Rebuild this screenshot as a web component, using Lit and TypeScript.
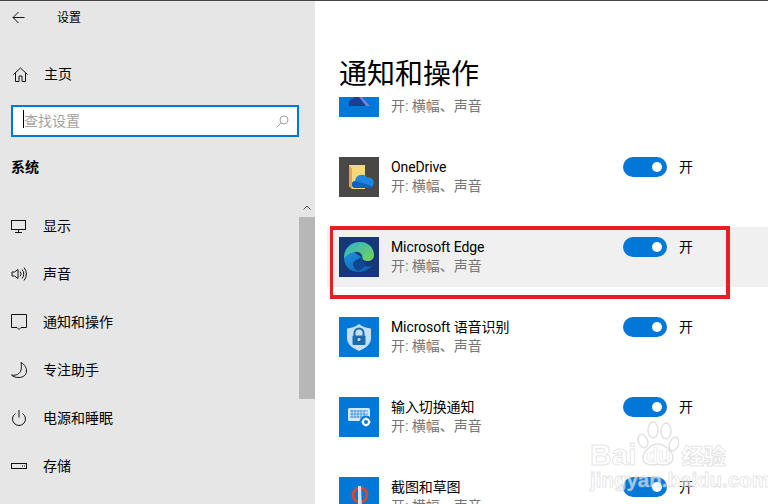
import { LitElement, html, css, svg } from "lit";
import { customElement } from "lit/decorators.js";

const navIcons: Record<string, unknown> = {
  display: svg`<rect x="0.5" y="2.5" width="14" height="9"/><path d="M7.5 11.5v3M4 14.5h7"/>`,
  sound: svg`<path d="M1 6h2.500L7 3.500v9L3.500 10H1z"/><path d="M9 5.500a3.500 3.500 0 0 1 0 5M11 3.500a6.500 6.500 0 0 1 0 9M13 1.500a10 10 0 0 1 0 13"/>`,
  notify: svg`<path d="M.5 .5h15v13H10l-2 2-2-2H.5z"/>`,
  focus: svg`<path d="M10 .5C14 2.500 15.500 6 15.500 9c0 4-3.500 6.500-7.500 6.500-3 0-6-.7-7.500-2.500 4.500 1 8.500-1 9.500-5 .5-2.500.5-5 0-7.500z"/>`,
  power: svg`<path d="M4.500 3.500a6.500 6.500 0 1 0 7 0M8 0v7.500"/>`,
  storage: svg`<rect x="0.5" y="5.500" width="15" height="5"/><path d="M11 8h1M13 8h1"/>`,
};

const nav = [
  { label: "显示", icon: "display" },
  { label: "声音", icon: "sound" },
  { label: "通知和操作", icon: "notify" },
  { label: "专注助手", icon: "focus" },
  { label: "电源和睡眠", icon: "power" },
  { label: "存储", icon: "storage" },
];

const appIcons: Record<string, unknown> = {
  first: svg`<rect width="40" height="40" fill="#0078d7"/><path d="M10 29v-5l6-4h7l8 9z" fill="#1b3f8f"/><path d="M23 20l8 9h-4l-7-9z" fill="#7b7fe0"/>`,
  onedrive: svg`<rect width="40" height="40" fill="#4a4846"/>
    <path d="M10 8l16 0v24H13l-3-3z" fill="#f5d87e"/><path d="M10 8l3 4v20l-3-3z" fill="#d9ab45"/>
    <path d="M17 31a3.500 3.500 0 0 1-1-7 7 7 0 0 1 12.500-3.500 5.200 5.200 0 0 1 2 10.500z" fill="#1c86e0"/>
    <path d="M17 31a3.500 3.500 0 0 1-1-7l11 3 6 2.500c-.7 1-1.500 1.500-2.500 1.500z" fill="#0d62bd"/>`,
  edge: svg`<defs>
      <linearGradient id="eg" x1="0" y1="0" x2="1" y2="1"><stop offset="0" stop-color="#2fb0d6"/><stop offset="1" stop-color="#74d64e"/></linearGradient>
      <linearGradient id="eb" x1="0" y1="0" x2="1" y2="1"><stop offset="0" stop-color="#1e94e4"/><stop offset="1" stop-color="#0b5cab"/></linearGradient>
    </defs>
    <rect width="40" height="40" fill="#16387a"/>
    <path d="M5 20c0 9 6 15 15 15 5 0 10-2.500 13-6.500-3 1.500-7 1.500-10-1-1-3-1-5 0-7L12 13z" fill="url(#eb)"/>
    <path d="M5 21C5 11 12 5 21 5c9 0 14 6.500 14 13 0 4-3 6-6.500 6-3 0-5-1-5-3 0-4-3-7-8-6-5 1-8 3-10.500 6z" fill="url(#eg)"/>
    <path d="M14 27c0-3 4-4 8-6.500.5 2.500 2 4.500 5 6.500-2 3.500-5 6-8 7-3-1.500-5-4-5-7z" fill="#0f4692"/>`,
  shield: svg`<rect width="40" height="40" fill="#0078d7"/>
    <path d="M20 7c4 3 8 4 12 4.500V21c0 6-5 10-12 13-7-3-12-7-12-13v-9.500C12 11 16 10 20 7z" fill="#c5e0f5"/>
    <path d="M15.500 19v-3a4.500 4.500 0 0 1 9 0v3" fill="none" stroke="#1c6bb0" stroke-width="2"/>
    <rect x="13.500" y="18.500" width="13" height="9.500" rx="1" fill="#1c6bb0"/>
    <circle cx="20" cy="22.500" r="1.500" fill="#c5e0f5"/>`,
  keyboard: svg`<rect width="40" height="40" fill="#0078d7"/>
    <rect x="9" y="11" width="22" height="13" rx="1.500" fill="#d3e8f8"/>
    <path d="M11 14h18M11 17h18M11 20h14M13 13v8M16 13v8M19 13v8M22 13v8M25 13v8" stroke="#4a9be0" stroke-width="1"/>
    <circle cx="27" cy="25" r="6.500" fill="#0078d7"/>
    <circle cx="27" cy="25" r="3" fill="none" stroke="#fff" stroke-width="2"/>
    <path d="M27 20.500v2M27 27.500v2M22.500 25h2M29.500 25h2" stroke="#fff" stroke-width="1.500"/>`,
  snip: svg`<rect width="40" height="40" fill="#0078d7"/>
    <circle cx="21" cy="18" r="7" fill="none" stroke="#d8482a" stroke-width="3"/>
    <path d="M19 9h3l1 24h-4z" fill="#cfe3f5"/>
    <circle cx="13" cy="29" r="3" fill="none" stroke="#2a66b0" stroke-width="2"/>`,
};

const rows = [
  { name: "", icon: "first", clipped: true },
  { name: "OneDrive", icon: "onedrive" },
  { name: "Microsoft Edge", icon: "edge", active: true },
  { name: "Microsoft 语音识别", icon: "shield" },
  { name: "输入切换通知", icon: "keyboard" },
  { name: "截图和草图", icon: "snip" },
];

@customElement("app-root")
export class AppRoot extends LitElement {
  static styles = css`
    :host {
      display: flex;
      position: relative;
      width: 768px;
      height: 504px;
      overflow: hidden;
      background: #fff;
      color: #000;
      font-family: Roboto, "Noto Sans CJK SC", sans-serif;
      font-size: 14px;
      box-sizing: border-box;
      border-top: 1px solid #444;
    }
    svg {
      display: block;
    }
    .side {
      position: relative;
      width: 315px;
      flex: none;
      background: #e6e6e6;
    }
    .head {
      display: flex;
      align-items: center;
      height: 32px;
      padding-left: 12px;
    }
    .head span {
      margin: 0 0 2px 32px;
      font-size: 12px;
    }
    .line {
      fill: none;
      stroke: #111;
      stroke-width: 1;
    }
    .home {
      display: flex;
      align-items: center;
      height: 48px;
      margin-top: 17px;
      padding-left: 13px;
      gap: 16px;
    }
    .home span,
    .item span {
      margin-bottom: 2px;
    }
    .search {
      position: relative;
      display: flex;
      align-items: center;
      justify-content: space-between;
      box-sizing: border-box;
      width: 288px;
      height: 32px;
      margin: 7px 0 0 11px;
      padding: 0 8px 0 11px;
      background: #fff;
      border: 2px solid #0078d7;
      color: #a3a3a3;
    }
    .search span {
      margin-bottom: 2px;
    }
    .caret {
      position: absolute;
      left: 10px;
      top: 3px;
      width: 1px;
      height: 18px;
      background: #000;
    }
    .section {
      height: 20px;
      line-height: 20px;
      margin: 20px 0 25px 11px;
      font-weight: 700;
    }
    .item {
      display: flex;
      align-items: center;
      height: 48px;
      padding-left: 11px;
      gap: 16px;
    }
    .item svg {
      width: 16px;
      height: 16px;
    }
    .bar {
      position: absolute;
      right: 0;
      top: 216px;
      width: 16px;
      height: 182px;
      background: #b7b7b7;
    }
    .up {
      position: absolute;
      right: 4px;
      top: 204px;
    }
    .main {
      flex: 1;
      display: flex;
      flex-direction: column;
      min-width: 0;
      padding-left: 12px;
    }
    h1 {
      margin: 0;
      height: 96px;
      box-sizing: border-box;
      padding: 54px 0 0 12px;
      font-size: 28px;
      line-height: 40px;
      font-weight: 400;
    }
    .list {
      flex: 1;
      overflow: hidden;
    }
    .row {
      display: flex;
      align-items: flex-start;
      height: 60px;
      padding: 10px 0 10px 12px;
      box-sizing: border-box;
      margin-bottom: 20px;
    }
    .row.clipped {
      margin-top: -30px;
    }
    .row.active {
      background: #f0f0f0;
    }
    .pic {
      width: 40px;
      height: 40px;
      flex: none;
    }
    .text {
      width: 232px;
      flex: none;
      margin-left: 12px;
    }
    .name {
      height: 20px;
      line-height: 20px;
      letter-spacing: -0.1px;
    }
    .sub {
      height: 19px;
      line-height: 19px;
      color: #767676;
    }
    .toggle {
      display: flex;
      align-items: center;
      justify-content: flex-end;
      box-sizing: border-box;
      width: 44px;
      height: 20px;
      padding-right: 5px;
      border-radius: 10px;
      background: #0078d7;
      flex: none;
    }
    .toggle i {
      width: 10px;
      height: 10px;
      border-radius: 50%;
      background: #fff;
    }
    .state {
      margin-left: 12px;
      height: 20px;
      line-height: 20px;
    }
    .mark {
      position: absolute;
      left: 330px;
      top: 225px;
      width: 400px;
      height: 73px;
      box-sizing: border-box;
      border: 4px solid #ed1c24;
      border-left-width: 3px;
      pointer-events: none;
    }
    .wm {
      position: absolute;
      left: 590px;
      top: 420px;
      width: 150px;
      color: rgba(255, 255, 255, 0.6);
      -webkit-text-stroke: 1px rgba(190, 190, 190, 0.4);
      font-family: "Liberation Sans", sans-serif;
      font-weight: 700;
      pointer-events: none;
    }
    .brand {
      display: flex;
      align-items: flex-end;
      height: 45px;
      font-size: 30px;
      line-height: 29px;
    }
    .brand span {
      margin-bottom: -3px;
    }
    .brand svg {
      margin-right: 3px;
      flex: none;
    }
    .brand b {
      font-family: "Noto Sans CJK SC", sans-serif;
      font-size: 22px;
      line-height: 24px;
    }
    .url {
      margin-top: 4px;
      font-size: 20.5px;
      line-height: 20px;
      white-space: nowrap;
    }
    .paw-text {
      font-size: 20px;
      font-weight: 700;
      fill: rgba(255, 255, 255, 0.6);
      stroke-width: 0.6;
    }
  `;

  renderRow(r: { name: string; icon: string; clipped?: boolean; active?: boolean }) {
    return html`<div class="row ${r.clipped ? "clipped" : ""} ${r.active ? "active" : ""}">
      <svg class="pic" viewBox="0 0 40 40">${appIcons[r.icon]}</svg>
      <div class="text">
        <div class="name">${r.name}</div>
        <div class="sub">开: 横幅、声音</div>
      </div>
      ${r.clipped
        ? ""
        : html`<div class="toggle"><i></i></div>
            <div class="state">开</div>`}
    </div>`;
  }

  render() {
    return html`
      <div class="side">
        <div class="head">
          <svg class="line" width="13" height="13" viewBox="0 0 13 13"><path d="M12.500 6.500H1M6.500 1 1 6.500 6.500 12"/></svg>
          <span>设置</span>
        </div>
        <div class="home">
          <svg class="line" width="15" height="15" viewBox="0 0 15 15"><path d="M.5 7.500 7.500 1l7 6.500M2.500 6v8.500h3.500V9h3v5.500h3.500V6"/></svg>
          <span>主页</span>
        </div>
        <div class="search">
          <i class="caret"></i>
          <span>查找设置</span>
          <svg width="13" height="13" viewBox="0 0 13 13" fill="none" stroke="#a3a3a3"><circle cx="8" cy="5" r="4"/><path d="M5 8 .5 12.500"/></svg>
        </div>
        <div class="section">系统</div>
        ${nav.map(
          (n) => html`<div class="item">
            <svg class="line" viewBox="0 0 16 16">${navIcons[n.icon]}</svg>
            <span>${n.label}</span>
          </div>`
        )}
        <svg class="up" width="8" height="5" viewBox="0 0 8 5" fill="none" stroke="#555"><path d="M.5 4.500 4 1l3.500 3.500"/></svg>
        <div class="bar"></div>
      </div>
      <div class="main">
        <h1>通知和操作</h1>
        <div class="list">${rows.map((r) => this.renderRow(r))}</div>
      </div>
      <div class="mark"></div>
      <div class="wm">
        <div class="brand">
          <span>Bai</span>
          <svg width="42" height="45" viewBox="0 0 42 45" fill="rgba(255,255,255,.5)" stroke="rgba(190,190,190,.45)" stroke-width="1.500">
            <ellipse cx="6" cy="20" rx="4.500" ry="7" transform="rotate(-20 6 20)"/>
            <ellipse cx="16" cy="9" rx="5" ry="8"/>
            <ellipse cx="29" cy="10" rx="5" ry="8"/>
            <ellipse cx="37" cy="23" rx="4.500" ry="7" transform="rotate(20 37 23)"/>
            <path d="M21 23c7 0 15 8 15 14 0 7-9 8-15 6-6 2-15 1-15-6 0-6 8-14 15-14z"/>
            <text class="paw-text" x="9" y="41">du</text>
          </svg>
          <b>经验</b>
        </div>
        <div class="url">jingyan.baidu.com</div>
      </div>
    `;
  }
}
